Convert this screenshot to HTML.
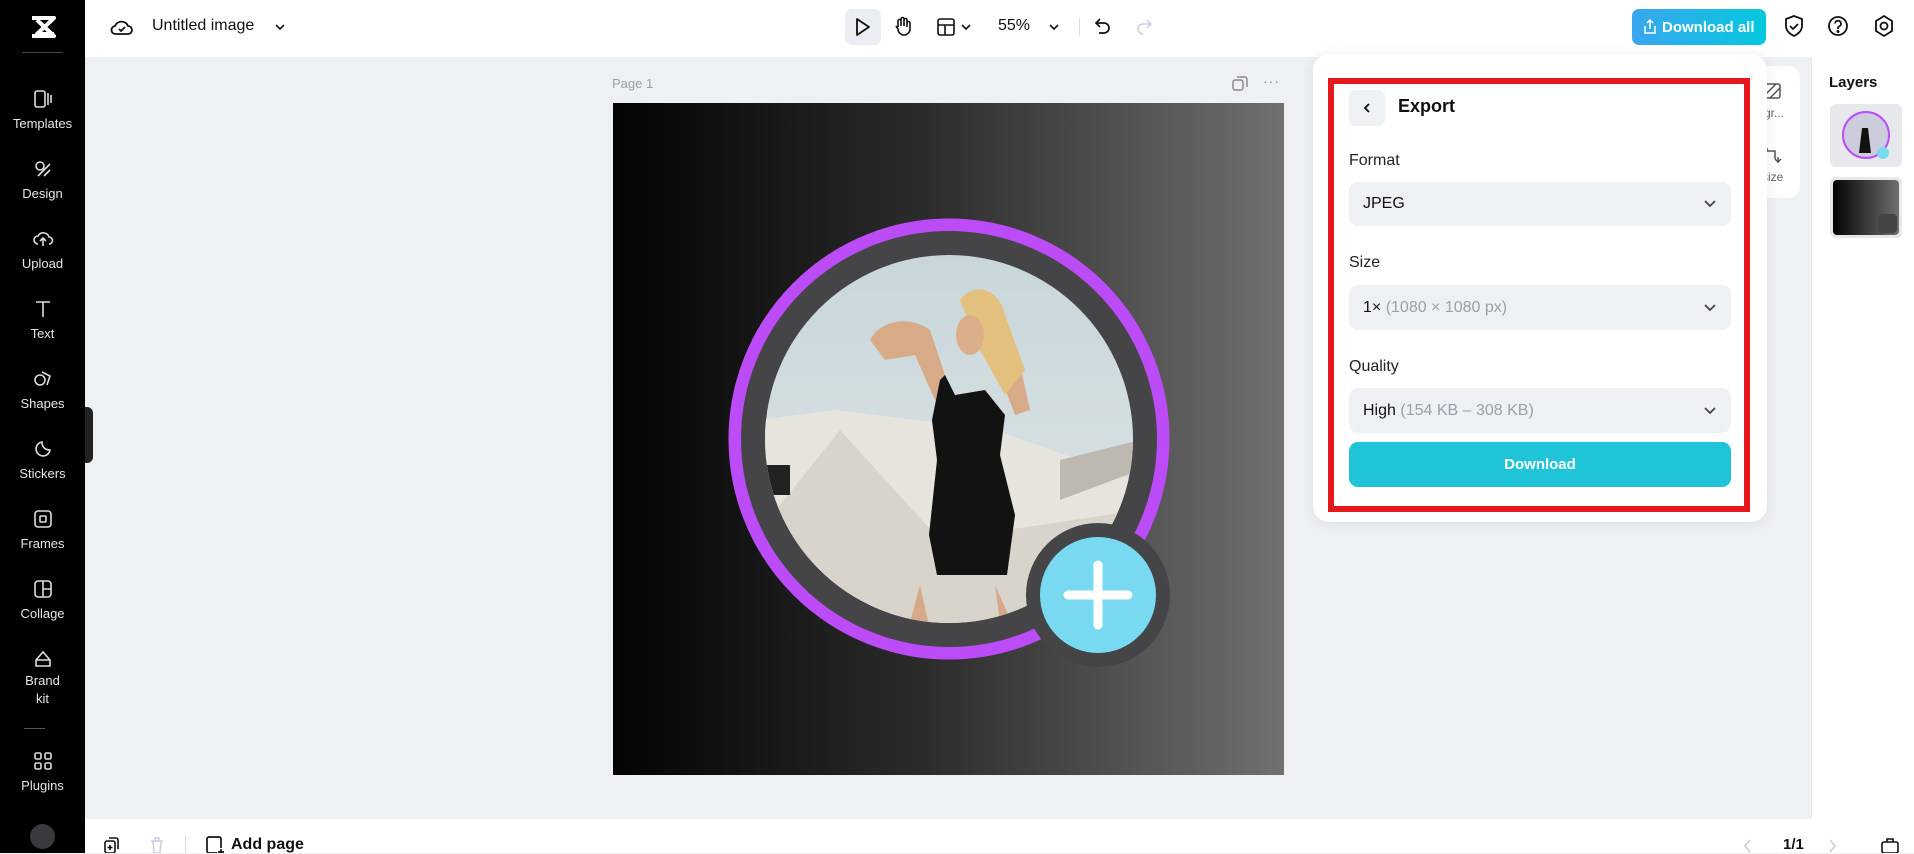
<!DOCTYPE html>
<html><head><meta charset="utf-8"><style>
*{box-sizing:border-box;margin:0;padding:0}
body{width:1914px;height:853px;overflow:hidden;font-family:"Liberation Sans",sans-serif;background:#eef1f4;position:relative;color:#111}
.abs{position:absolute}
#side{left:0;top:0;width:85px;height:853px;background:#000;color:#ddd}
.si{position:absolute;left:0;width:85px;text-align:center;font-size:13px;color:#e6e6e6}
.si svg{display:block;margin:0 auto 6px}
#top{left:85px;top:0;width:1829px;height:57px;background:#fff}
.dd{position:absolute;left:1349px;width:382px;background:#eef1f4;border-radius:9px;font-size:16px;padding-left:14px;display:flex;align-items:center}
.dd .c{position:absolute;right:14px;top:50%;margin-top:-6px}
.lbl{position:absolute;left:1349px;font-size:16px;color:#222}
</style></head><body>

<div id="side" class="abs">
 <svg class="abs" style="left:29px;top:14px" width="28" height="26" viewBox="0 0 28 26"><path d="M3 4h22L8 20h17M3 22h22L8 6" stroke="#fff" stroke-width="4" fill="none" stroke-linejoin="round"/></svg>
 <div class="abs" style="left:22px;top:52px;width:41px;height:1px;background:#444"></div>
 <div class="si" style="top:88px"><svg width="22" height="22" viewBox="0 0 22 22" fill="none" stroke="#ddd" stroke-width="1.6"><rect x="3" y="3" width="10" height="16" rx="2"/><path d="M16 5v12M19 7v8"/></svg>Templates</div>
 <div class="si" style="top:158px"><svg width="22" height="22" viewBox="0 0 22 22" fill="none" stroke="#ddd" stroke-width="1.6"><circle cx="8" cy="8" r="4"/><path d="M6 18l12-12M12 18l6-6"/></svg>Design</div>
 <div class="si" style="top:228px"><svg width="22" height="22" viewBox="0 0 22 22" fill="none" stroke="#ddd" stroke-width="1.6"><path d="M6 16a4 4 0 0 1 0-8 6 6 0 0 1 11 1 3.5 3.5 0 0 1 0 7M11 18v-7M8 13l3-3 3 3"/></svg>Upload</div>
 <div class="si" style="top:298px"><svg width="22" height="22" viewBox="0 0 22 22" fill="none" stroke="#ddd" stroke-width="1.6"><path d="M4 4h14M11 4v15"/></svg>Text</div>
 <div class="si" style="top:368px"><svg width="22" height="22" viewBox="0 0 22 22" fill="none" stroke="#ddd" stroke-width="1.6"><circle cx="8" cy="12" r="5"/><path d="M10 4l8 4-3 9"/></svg>Shapes</div>
 <div class="si" style="top:438px"><svg width="22" height="22" viewBox="0 0 22 22" fill="none" stroke="#ddd" stroke-width="1.6"><path d="M18 12a7 7 0 1 1-8-8c0 5 3 8 8 8z"/></svg>Stickers</div>
 <div class="si" style="top:508px"><svg width="22" height="22" viewBox="0 0 22 22" fill="none" stroke="#ddd" stroke-width="1.6"><rect x="3" y="3" width="16" height="16" rx="3"/><rect x="8" y="8" width="6" height="6" rx="1"/></svg>Frames</div>
 <div class="si" style="top:578px"><svg width="22" height="22" viewBox="0 0 22 22" fill="none" stroke="#ddd" stroke-width="1.6"><rect x="3" y="3" width="16" height="16" rx="3"/><path d="M11 3v16M11 11h8"/></svg>Collage</div>
 <div class="si" style="top:648px;line-height:18px"><svg width="22" height="22" viewBox="0 0 22 22" fill="none" stroke="#ddd" stroke-width="1.6" style="margin-bottom:2px"><path d="M4 12l7-8 7 8v6H4z M4 12h14"/></svg>Brand<br>kit</div>
 <div class="abs" style="left:24px;top:728px;width:21px;height:1px;background:#555"></div>
 <div class="si" style="top:750px"><svg width="22" height="22" viewBox="0 0 22 22" fill="none" stroke="#ddd" stroke-width="1.6"><rect x="3" y="3" width="6" height="6" rx="1.5"/><rect x="13" y="3" width="6" height="6" rx="1.5"/><rect x="3" y="13" width="6" height="6" rx="1.5"/><rect x="13" y="13" width="6" height="6" rx="1.5"/></svg>Plugins</div>
 <div class="abs" style="left:30px;top:824px;width:25px;height:25px;border-radius:50%;background:#3a3a3e"></div>
</div>
<div class="abs" style="left:85px;top:407px;width:8px;height:56px;background:#222;border-radius:0 6px 6px 0"></div>

<div id="top" class="abs"></div>
<svg class="abs" style="left:110px;top:16px" width="24" height="22" viewBox="0 0 24 22" fill="none" stroke="#111" stroke-width="1.8"><path d="M6 18a4 4 0 0 1-1-8 7 7 0 0 1 13 0 4 4 0 0 1 0 8z"/><path d="M9 13l2 2 4-4"/></svg>
<div class="abs" style="left:152px;top:17px;font-size:16px;color:#111">Untitled image</div>
<svg class="abs" style="left:273px;top:20px" width="14" height="14" viewBox="0 0 14 14"><path d="M3 5l4 4 4-4" stroke="#111" stroke-width="1.6" fill="none"/></svg>

<div class="abs" style="left:845px;top:9px;width:36px;height:36px;border-radius:7px;background:#eaedf1"></div>
<svg class="abs" style="left:853px;top:16px" width="20" height="22" viewBox="0 0 20 22"><path d="M4 3l12 8-12 8z" stroke="#111" stroke-width="1.8" fill="none" stroke-linejoin="round"/></svg>
<svg class="abs" style="left:893px;top:15px" width="20" height="22" viewBox="0 0 20 22" fill="none" stroke="#111" stroke-width="1.6"><path d="M5 12V6a1.5 1.5 0 0 1 3 0v5V4a1.5 1.5 0 0 1 3 0v7V5a1.5 1.5 0 0 1 3 0v7V8a1.5 1.5 0 0 1 3 0v6a6 6 0 0 1-12 0l-2-3"/></svg>
<svg class="abs" style="left:936px;top:17px" width="40" height="20" viewBox="0 0 40 20" fill="none" stroke="#111" stroke-width="1.6"><rect x="2" y="2" width="16" height="16" rx="2"/><path d="M2 8h16M9 8v10M26 8l4 4 4-4"/></svg>
<div class="abs" style="left:998px;top:17px;font-size:16px">55%</div>
<svg class="abs" style="left:1047px;top:20px" width="14" height="14" viewBox="0 0 14 14"><path d="M3 5l4 4 4-4" stroke="#111" stroke-width="1.6" fill="none"/></svg>
<div class="abs" style="left:1079px;top:18px;width:1px;height:18px;background:#ddd"></div>
<svg class="abs" style="left:1093px;top:16px" width="20" height="20" viewBox="0 0 20 20" fill="none" stroke="#111" stroke-width="1.7"><path d="M7 3L3 7l4 4M3 7h8a5 5 0 0 1 0 10H6"/></svg>
<svg class="abs" style="left:1134px;top:16px" width="20" height="20" viewBox="0 0 20 20" fill="none" stroke="#ccd" stroke-width="1.5"><path d="M13 4l4 4-4 4M17 8H9a5 5 0 0 0 0 10"/></svg>

<div class="abs" style="left:1632px;top:9px;width:134px;height:36px;border-radius:7px;background:linear-gradient(90deg,#3aa6ef,#04c8de);color:#fff;font-size:15px;font-weight:bold;padding:10px 0 0 30px">Download all</div>
<svg class="abs" style="left:1642px;top:18px" width="16" height="17" viewBox="0 0 16 17" fill="none" stroke="#fff" stroke-width="1.5"><path d="M8 11V2M5 5l3-3 3 3M3 8v7h10V8"/></svg>
<svg class="abs" style="left:1783px;top:14px" width="22" height="24" viewBox="0 0 22 24" fill="none" stroke="#111" stroke-width="1.8"><path d="M11 2l8 3v7c0 5-4 8-8 10-4-2-8-5-8-10V5z"/><path d="M7 12l3 3 5-5"/></svg>
<svg class="abs" style="left:1827px;top:15px" width="22" height="22" viewBox="0 0 22 22" fill="none" stroke="#111" stroke-width="1.8"><circle cx="11" cy="11" r="9"/><path d="M8 8.5a3 3 0 1 1 4 3c-1 .5-1 1-1 2.5"/><circle cx="11" cy="16.5" r=".6" fill="#111"/></svg>
<svg class="abs" style="left:1873px;top:14px" width="22" height="24" viewBox="0 0 22 24" fill="none" stroke="#111" stroke-width="1.8"><path d="M11 2l8 5v10l-8 5-8-5V7z"/><circle cx="11" cy="12" r="3.5"/></svg>

<div class="abs" style="left:612px;top:76px;font-size:13px;color:#98a0aa">Page 1</div>
<svg class="abs" style="left:1231px;top:75px" width="18" height="18" viewBox="0 0 18 18" fill="none" stroke="#888" stroke-width="1.4"><rect x="2" y="5" width="10" height="10" rx="2"/><path d="M6 2h8a2 2 0 0 1 2 2v8"/></svg>
<div class="abs" style="left:1263px;top:73px;font-size:14px;color:#888;letter-spacing:1px">···</div>

<div class="abs" style="left:613px;top:103px;width:671px;height:672px;background:linear-gradient(90deg,#030303,#2a2a2a 45%,#707070)"></div>
<svg class="abs" style="left:613px;top:103px" width="671" height="672" viewBox="613 103 671 672">
 <defs>
  <clipPath id="cp"><circle cx="949" cy="439" r="184"/></clipPath>
  <linearGradient id="sky" x1="0" y1="0" x2="0" y2="1"><stop offset="0" stop-color="#c8d6da"/><stop offset="1" stop-color="#dfe6e6"/></linearGradient>
 </defs>
 <circle cx="949" cy="439" r="214" fill="none" stroke="#bb4cf7" stroke-width="13"/>
 <circle cx="949" cy="439" r="196" fill="none" stroke="#454547" stroke-width="24"/>
 <g clip-path="url(#cp)">
  <rect x="760" y="250" width="380" height="380" fill="url(#sky)"/>
  <path d="M760 420l75-10 160 20 140 50v150H760z" fill="#e7e4de"/>
  <path d="M840 430l100 110 200-30v120H760V530z" fill="#d8d4cc"/>
  <path d="M1060 460l80-20v30l-80 30z" fill="#bdb8b0"/>
  <rect x="765" y="465" width="25" height="30" fill="#222"/>
  <path d="M870 340c10-20 40-25 60-10l20 60-15 10-20-45-30 5z" fill="#d8ab88"/>
  <path d="M1000 340l20 25 10 45-15 5-15-40z" fill="#d8ab88"/>
  <path d="M960 300c15-20 40-10 45 15l20 55-20 25-25-45z" fill="#e3c07e"/>
  <ellipse cx="970" cy="335" rx="14" ry="20" fill="#dcae8a"/>
  <path d="M945 375l10 20 30-5 20 25-5 40 15 60-8 60h-70l-8-40 8-75-5-40 8-40z" fill="#121212"/>
  <path d="M920 585l-12 45h22zM995 585l6 45h14z" fill="#d6a98a"/>
 </g>
 <circle cx="1098" cy="595" r="72" fill="#454547"/>
 <circle cx="1098" cy="595" r="58" fill="#79d9f0"/>
 <path d="M1098 565v60M1068 595h60" stroke="#fff" stroke-width="9" stroke-linecap="round"/>
</svg>

<div class="abs" style="left:1700px;top:66px;width:100px;height:132px;background:#fff;border-radius:12px"></div>
<div class="abs" style="left:1758px;top:106px;font-size:12px;color:#666">kgr...</div>
<div class="abs" style="left:1762px;top:170px;font-size:12px;color:#666">size</div>
<svg class="abs" style="left:1764px;top:82px" width="18" height="18" viewBox="0 0 18 18" fill="none" stroke="#555" stroke-width="1.5"><rect x="2" y="2" width="14" height="14" rx="2"/><path d="M2 12L12 2M6 16L16 6"/></svg>
<svg class="abs" style="left:1764px;top:146px" width="18" height="18" viewBox="0 0 18 18" fill="none" stroke="#555" stroke-width="1.5"><path d="M3 5h8v8M3 2v3M14 11v6M11 13l3 3 3-3"/></svg>

<div class="abs" style="left:1313px;top:54px;width:454px;height:468px;background:#fff;border-radius:16px;box-shadow:0 2px 14px rgba(0,0,0,.08)"></div>
<div class="abs" style="left:1328px;top:78px;width:422px;height:434px;border:6px solid #e5191d"></div>
<div class="abs" style="left:1349px;top:90px;width:36px;height:36px;border-radius:7px;background:#eef1f4"></div>
<svg class="abs" style="left:1360px;top:101px" width="14" height="14" viewBox="0 0 14 14"><path d="M9 3L5 7l4 4" stroke="#111" stroke-width="1.8" fill="none"/></svg>
<div class="abs" style="left:1398px;top:96px;font-size:18px;font-weight:bold">Export</div>
<div class="lbl" style="top:152px">Format</div>
<div class="dd" style="top:182px;height:44px">JPEG<svg class="c" width="14" height="12" viewBox="0 0 14 12"><path d="M2 3l5 5 5-5" stroke="#444" stroke-width="1.8" fill="none"/></svg></div>
<div class="lbl" style="top:254px">Size</div>
<div class="dd" style="top:285px;height:45px">1×&nbsp;<span style="color:#98a0aa">(1080 × 1080 px)</span><svg class="c" width="14" height="12" viewBox="0 0 14 12"><path d="M2 3l5 5 5-5" stroke="#444" stroke-width="1.8" fill="none"/></svg></div>
<div class="lbl" style="top:358px">Quality</div>
<div class="dd" style="top:388px;height:45px">High&nbsp;<span style="color:#98a0aa">(154 KB – 308 KB)</span><svg class="c" width="14" height="12" viewBox="0 0 14 12"><path d="M2 3l5 5 5-5" stroke="#444" stroke-width="1.8" fill="none"/></svg></div>
<div class="abs" style="left:1349px;top:442px;width:382px;height:45px;border-radius:9px;background:#20c4d8;color:#fff;font-weight:bold;font-size:15px;text-align:center;line-height:45px">Download</div>

<div class="abs" style="left:1811px;top:57px;width:103px;height:762px;background:#fff;border-left:1px solid #e6e8eb"></div>
<div class="abs" style="left:1829px;top:74px;font-size:15px;font-weight:bold">Layers</div>
<div class="abs" style="left:1830px;top:104px;width:72px;height:63px;border-radius:6px;background:#e6e8eb"></div>
<svg class="abs" style="left:1840px;top:108px" width="52" height="56" viewBox="0 0 52 56"><circle cx="26" cy="27" r="23" fill="#ccd" stroke="#bb4cf7" stroke-width="2"/><path d="M22 20l-3 25h12l-3-25z" fill="#111"/><circle cx="43" cy="45" r="6" fill="#79d9f0"/></svg>
<div class="abs" style="left:1830px;top:177px;width:72px;height:61px;border-radius:6px;background:#e6e8eb"></div>
<div class="abs" style="left:1833px;top:180px;width:66px;height:55px;border-radius:4px;background:linear-gradient(90deg,#030303,#6f6f6f)"></div>
<div class="abs" style="left:1878px;top:214px;width:19px;height:19px;border-radius:4px;background:#444"></div>

<div class="abs" style="left:85px;top:819px;width:1829px;height:34px;background:#fff"></div>
<svg class="abs" style="left:103px;top:836px" width="18" height="17" viewBox="0 0 18 17" fill="none" stroke="#111" stroke-width="1.6"><rect x="2" y="5" width="10" height="12" rx="2"/><path d="M6 2h7a2 2 0 0 1 2 2v9M7 9v5M4.5 11.5h5"/></svg>
<svg class="abs" style="left:149px;top:836px" width="16" height="17" viewBox="0 0 16 17" fill="none" stroke="#ccd" stroke-width="1.5"><path d="M2 5h12M4 5l1 12h6l1-12M6 5V2h4v3"/></svg>
<div class="abs" style="left:185px;top:836px;width:1px;height:17px;background:#ddd"></div>
<svg class="abs" style="left:205px;top:836px" width="20" height="17" viewBox="0 0 20 17" fill="none" stroke="#111" stroke-width="1.7"><path d="M12 17H4a2 2 0 0 1-2-2V3a2 2 0 0 1 2-2h10a2 2 0 0 1 2 2v9M16 13v6M13 16h6"/></svg>
<div class="abs" style="left:231px;top:836px;font-size:16px;font-weight:bold">Add page</div>
<svg class="abs" style="left:1742px;top:838px" width="12" height="15" viewBox="0 0 12 15"><path d="M8 2L3 8l5 6" stroke="#ccd" stroke-width="1.6" fill="none"/></svg>
<div class="abs" style="left:1783px;top:836px;font-size:15px;font-weight:bold">1/1</div>
<svg class="abs" style="left:1826px;top:838px" width="12" height="15" viewBox="0 0 12 15"><path d="M4 2l5 6-5 6" stroke="#ccd" stroke-width="1.6" fill="none"/></svg>
<svg class="abs" style="left:1880px;top:836px" width="20" height="17" viewBox="0 0 20 17" fill="none" stroke="#111" stroke-width="1.6"><rect x="2" y="6" width="16" height="11" rx="2"/><path d="M7 6V3h6v3"/></svg>
</body></html>
